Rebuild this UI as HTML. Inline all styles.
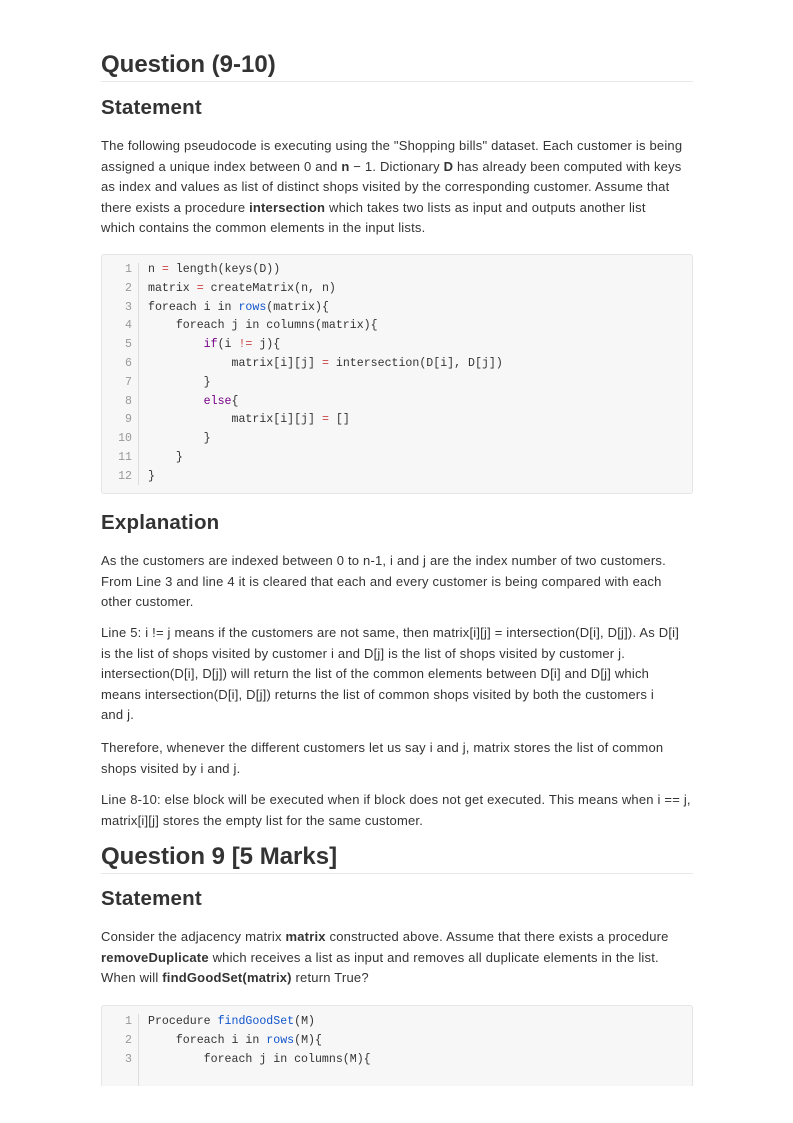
<!DOCTYPE html>
<html><head><meta charset="utf-8"><style>
body{margin:0;background:#fff;width:793px;height:1123px;overflow:hidden;font-family:"Liberation Sans",sans-serif;color:#333;}
h1{position:absolute;left:101px;width:592px;margin:0;font-size:24px;font-weight:bold;border-bottom:1px solid #e8e8e8;line-height:30px;padding-bottom:1px;color:#333}
h2{position:absolute;left:101px;margin:0;font-size:20.5px;font-weight:bold;line-height:26px;color:#333;letter-spacing:0.2px}
p{position:absolute;left:101px;width:600px;margin:0;font-size:13px;line-height:20.6px;color:#333;letter-spacing:0.2px;white-space:nowrap}
.code{position:absolute;left:101px;width:590px;background:#f7f7f7;border:1px solid #e5e5e5;border-radius:3px;font-family:"Liberation Mono",monospace;font-size:11.6px;}
.ln{position:absolute;left:0;width:30px;text-align:right;color:#999;}
.gut{position:absolute;left:36px;top:8px;bottom:8px;border-left:1px solid #ddd}
.cl{position:absolute;left:46px;white-space:pre;color:#333}
.k{color:#708}.o{color:#c44}.b{color:#15c}
</style></head><body>
<h1 style="top:50px">Question (9-10)</h1>
<h2 style="top:95px">Statement</h2>
<p style="top:136px">The following pseudocode is executing using the "Shopping bills" dataset. Each customer is being<br>assigned a unique index between 0 and <b>n</b> − 1. Dictionary <b>D</b> has already been computed with keys<br>as index and values as list of distinct shops visited by the corresponding customer. Assume that<br>there exists a procedure <b>intersection</b> which takes two lists as input and outputs another list<br>which contains the common elements in the input lists.</p>
<div class="code" style="top:254px;height:238px">
<div class="gut"></div>
<div class="ln" style="top:8px">1</div><div class="cl" style="top:8px">n <span class="o">=</span> length(keys(D))</div>
<div class="ln" style="top:27px">2</div><div class="cl" style="top:27px">matrix <span class="o">=</span> createMatrix(n, n)</div>
<div class="ln" style="top:46px">3</div><div class="cl" style="top:46px">foreach i in <span class="b">rows</span>(matrix){</div>
<div class="ln" style="top:64px">4</div><div class="cl" style="top:64px">    foreach j in columns(matrix){</div>
<div class="ln" style="top:83px">5</div><div class="cl" style="top:83px">        <span class="k">if</span>(i <span class="o">!=</span> j){</div>
<div class="ln" style="top:102px">6</div><div class="cl" style="top:102px">            matrix[i][j] <span class="o">=</span> intersection(D[i], D[j])</div>
<div class="ln" style="top:121px">7</div><div class="cl" style="top:121px">        }</div>
<div class="ln" style="top:140px">8</div><div class="cl" style="top:140px">        <span class="k">else</span>{</div>
<div class="ln" style="top:158px">9</div><div class="cl" style="top:158px">            matrix[i][j] <span class="o">=</span> []</div>
<div class="ln" style="top:177px">10</div><div class="cl" style="top:177px">        }</div>
<div class="ln" style="top:196px">11</div><div class="cl" style="top:196px">    }</div>
<div class="ln" style="top:215px">12</div><div class="cl" style="top:215px">}</div>
</div>
<h2 style="top:510px">Explanation</h2>
<p style="top:551px">As the customers are indexed between 0 to n-1, i and j are the index number of two customers.<br>From Line 3 and line 4 it is cleared that each and every customer is being compared with each<br>other customer.</p>
<p style="top:623px">Line 5: i != j means if the customers are not same, then matrix[i][j] = intersection(D[i], D[j]). As D[i]<br>is the list of shops visited by customer i and D[j] is the list of shops visited by customer j.<br>intersection(D[i], D[j]) will return the list of the common elements between D[i] and D[j] which<br>means intersection(D[i], D[j]) returns the list of common shops visited by both the customers i<br>and j.</p>
<p style="top:738px">Therefore, whenever the different customers let us say i and j, matrix stores the list of common<br>shops visited by i and j.</p>
<p style="top:790px">Line 8-10: else block will be executed when if block does not get executed. This means when i == j,<br>matrix[i][j] stores the empty list for the same customer.</p>
<h1 style="top:842px">Question 9 [5 Marks]</h1>
<h2 style="top:886px">Statement</h2>
<p style="top:927px">Consider the adjacency matrix <b>matrix</b> constructed above. Assume that there exists a procedure<br><b>removeDuplicate</b> which receives a list as input and removes all duplicate elements in the list.<br>When will <b>findGoodSet(matrix)</b> return True?</p>
<div class="code" style="top:1005px;height:80px;border-bottom:none;border-radius:3px 3px 0 0">
<div class="gut" style="bottom:0"></div>
<div class="ln" style="top:9px">1</div><div class="cl" style="top:9px">Procedure <span class="b">findGoodSet</span>(M)</div>
<div class="ln" style="top:28px">2</div><div class="cl" style="top:28px">    foreach i in <span class="b">rows</span>(M){</div>
<div class="ln" style="top:47px">3</div><div class="cl" style="top:47px">        foreach j in columns(M){</div>
</div>
</body></html>
